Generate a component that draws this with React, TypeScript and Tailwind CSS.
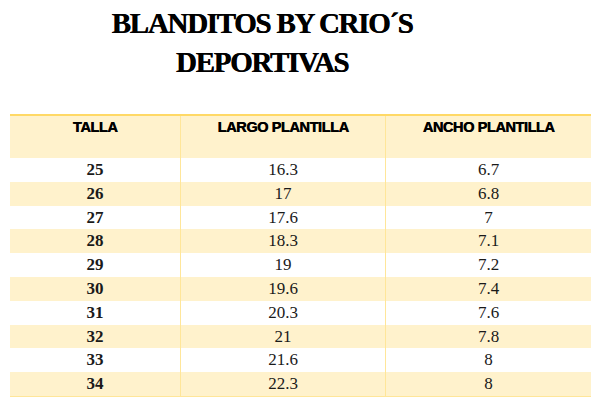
import React from "react";

const rows: [string, string, string][] = [
  ["25", "16.3", "6.7"],
  ["26", "17", "6.8"],
  ["27", "17.6", "7"],
  ["28", "18.3", "7.1"],
  ["29", "19", "7.2"],
  ["30", "19.6", "7.4"],
  ["31", "20.3", "7.6"],
  ["32", "21", "7.8"],
  ["33", "21.6", "8"],
  ["34", "22.3", "8"],
];

export default function App() {
  return (
    <div className="w-[600px] h-[407px] bg-white overflow-hidden pt-[4px]">
      <h1
        className="w-[524px] text-center text-black font-bold text-[29px] leading-[39px] tracking-[-1.3px] [text-shadow:0.5px_0_0_black]"
        style={{ fontFamily: '"Liberation Serif", serif' }}
      >
        BLANDITOS BY CRIO´S
        <br />
        DEPORTIVAS
      </h1>
      <div className="mt-[32px] ml-[10px] w-[581px] border-t-2 border-[#FFD966] border-b border-b-[#FFE699]">
        <div
          className="grid grid-cols-[170px_205px_206px] h-[42px] bg-[#FFF2CC] text-black font-bold text-[14.5px] leading-[20px] tracking-[-0.4px] [text-shadow:0.5px_0_0_black]"
          style={{ fontFamily: '"Liberation Sans", Arial, sans-serif' }}
        >
          <div className="text-center pt-[1px]">TALLA</div>
          <div className="text-center pt-[1px] border-l border-[#FFE699]">LARGO PLANTILLA</div>
          <div className="text-center pt-[1px] border-l border-[#FFE699]">ANCHO PLANTILLA</div>
        </div>
        {rows.map((r, i) => (
          <div
            key={r[0]}
            className={`grid grid-cols-[170px_205px_206px] h-[23.8px] text-[17px] leading-[23.8px] text-[#1a1a1a] ${
              i % 2 === 1 ? "bg-[#FFF2CC]" : "bg-white"
            }`}
            style={{ fontFamily: '"Liberation Serif", serif' }}
          >
            <div className="text-center font-bold">{r[0]}</div>
            <div className="text-center border-l border-[#FFE699]">{r[1]}</div>
            <div className="text-center border-l border-[#FFE699]">{r[2]}</div>
          </div>
        ))}
      </div>
    </div>
  );
}
